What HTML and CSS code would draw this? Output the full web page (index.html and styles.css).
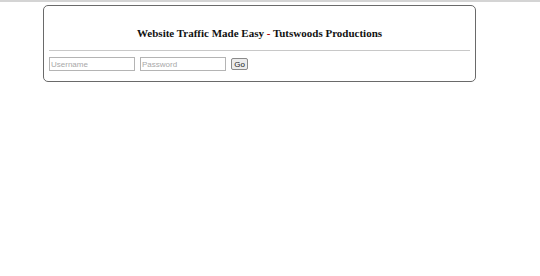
FILE: index.html
```html
<!DOCTYPE html>
<html lang="en">
<head>
    <meta charset="UTF-8">
    <title>Website Traffic Made Easy</title>
    <link rel="stylesheet" href="styles.css">
</head>
<body>
    <div class="topline"></div>
    <div class="box">
        <h1>Website Traffic Made Easy <span class="dash">-</span> Tutswoods Productions</h1>
        <hr>
        <form class="login" action="">
            <input type="text" placeholder="Username">
            <input type="password" placeholder="Password">
            <button type="submit">Go</button>
        </form>
    </div>
</body>
</html>
```

FILE: styles.css
```css
body {
    margin: 0;
    padding: 0;
    background: #ffffff;
    font-family: "Liberation Serif", serif;
}
.topline {
    height: 2px;
    background: #d4d4d4;
}
.box {
    margin: 3px 0 0 43px;
    width: 431px;
    height: 75px;
    border: 1px solid #6a6a6a;
    border-radius: 5px;
}
.box h1 {
    margin: 21px 0 0 0;
    text-align: center;
    font-size: 11px;
    font-weight: bold;
    color: #111;
}
.dash {
    color: #b00000;
}
.box hr {
    margin: 11px 5px 0 5px;
    border: none;
    border-top: 1px solid #c8c8c8;
    height: 0;
}
.login {
    display: flex;
    align-items: center;
    gap: 5px;
    margin: 6px 0 0 5px;
}
.login input {
    width: 82px;
    height: 10px;
    padding: 1px 1px;
    border: 1px solid #b4b4b4;
    font-family: "Liberation Sans", sans-serif;
    font-size: 8px;
    color: #333;
}
.login input::placeholder {
    color: #a8a8a8;
}
.login button {
    width: 17px;
    height: 12px;
    padding: 0;
    border: 1px solid #8a8a8a;
    border-radius: 2px;
    background: #ececec;
    font-family: "Liberation Sans", sans-serif;
    font-size: 8px;
    color: #222;
}
```
